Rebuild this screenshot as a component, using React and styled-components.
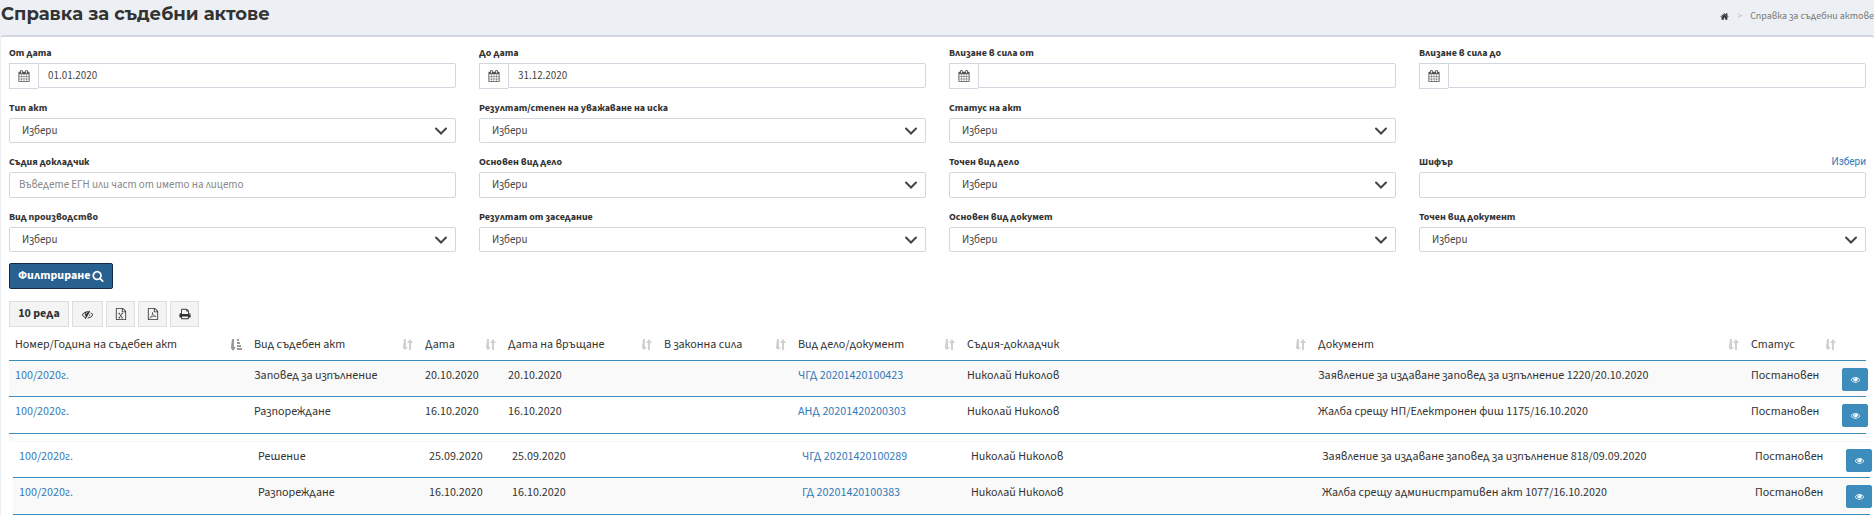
import React from "react";
import styled, { createGlobalStyle, css } from "styled-components";

const GlobalStyle = createGlobalStyle`
  *, *::before, *::after { box-sizing: border-box; }
  body {
    margin: 0;
    background: #ecf0f5;
    color: #333;
    font-family: "Source Sans 3", "Noto Sans", sans-serif;
    font-size: 12px;
    line-height: 16px;
  }
  button, input, select { font: inherit; color: inherit; }
  a { color: #337ab7; text-decoration: none; }
`;

const Header = styled.header`
  display: flex;
  align-items: flex-start;
  justify-content: space-between;
  height: 35px;
  padding-left: 1px;
`;

const Title = styled.h1`
  margin: 0;
  font-family: Montserrat, "Noto Sans", sans-serif;
  font-size: 18px;
  font-weight: 700;
  font-feature-settings: "locl" 0;
  line-height: 28px;
`;

const Breadcrumb = styled.nav`
  display: flex;
  align-items: center;
  gap: 8px;
  padding-top: 8px;
  font-size: 10px;
  color: #777;
  white-space: nowrap;

  a { display: flex; color: #333; }
  i { color: #bbb; font-style: normal; }
`;

const Box = styled.main`
  margin-left: 1px;
  padding: 8px 8px 0;
  background: #fff;
  border-top: 2px solid #d2d6de;
  border-radius: 3px 3px 0 0;
`;

const Filters = styled.form`
  display: grid;
  grid-template-columns: repeat(4, minmax(0, 1fr));
  column-gap: 23px;
  row-gap: 11px;
`;

const FieldCell = styled.div`
  display: grid;
  grid-template-rows: 18px 1fr;
`;

const LabelRow = styled.div`
  display: flex;
  justify-content: space-between;
  height: 16px;
`;

const Label = styled.label`
  font-size: 10px;
  font-weight: 700;
`;

const PickLink = styled.a`
  font-family: Roboto, "Liberation Sans", sans-serif;
  font-size: 10px;
`;

const control = css`
  width: 100%;
  min-width: 0;
  margin: 0;
  background: #fff;
  border: 1px solid #d2d6de;
  border-radius: 2px;
  color: #444;
  font-size: 11px;
  outline: none;
`;

const TextInput = styled.input`
  ${control}
  height: 26px;
  padding: 0 9px 1px;
  &::placeholder { color: #888; opacity: 1; }
`;

const DateGroup = styled.div`
  display: flex;
  align-items: flex-start;
  height: 26px;
`;

const Addon = styled.span`
  display: flex;
  flex: none;
  align-items: center;
  justify-content: center;
  width: 29px;
  height: 26px;
  border: 1px solid #d2d6de;
  border-right: 0;
  color: #555;
`;

const DateInput = styled.input`
  ${control}
  height: 25px;
  padding: 0 9px;
  border-radius: 0 2px 2px 0;
`;

const SelectWrap = styled.div`
  display: grid;
  align-items: center;
  min-height: 25px;

  > * { grid-area: 1 / 1; }
  svg { justify-self: end; margin-right: 9px; pointer-events: none; }
`;

const Select = styled.select`
  ${control}
  height: 100%;
  padding: 0 12px;
  appearance: none;
`;

const FilterButton = styled.button`
  display: flex;
  align-items: center;
  gap: 2px;
  height: 26px;
  margin-top: 11px;
  padding: 0 8px;
  background: #286090;
  border: 1px solid #122b40;
  border-radius: 2px;
  color: #fff;
  font-weight: 700;
`;

const Toolbar = styled.div`
  display: flex;
  gap: 3px;
  margin-top: 12px;
`;

const ToolButton = styled.button`
  display: flex;
  align-items: center;
  justify-content: center;
  width: ${(p) => p.$width};
  height: 26px;
  padding: 0;
  background: #f4f4f4;
  border: 1px solid #ddd;
  color: #333;
  font-weight: 700;
  white-space: nowrap;
`;

const Table = styled.table`
  width: 100%;
  table-layout: fixed;
  border-collapse: separate;
  border-spacing: 0;
`;

const Th = styled.th`
  height: 33px;
  padding: 2px 6px 0;
  font-weight: 400;
  text-align: left;
  white-space: nowrap;

  div { display: flex; align-items: center; justify-content: space-between; }
`;

const Row = styled.tr`
  background: ${(p) => (p.$striped ? "#f9f9f9" : "#fff")};
  &:last-child td { height: 38px; border-bottom: 1px solid #3c8dbc; }
`;

const Td = styled.td`
  height: 36px;
  padding: 7px 0 0 6px;
  border-top: 1px solid ${(p) => (p.$faint ? "#f4f4f4" : "#3c8dbc")};
  vertical-align: top;
  white-space: nowrap;
`;

const ActionTd = styled(Td)`
  padding: 7px 0 0;
`;

const ViewButton = styled.button`
  display: flex;
  align-items: center;
  justify-content: center;
  width: 26px;
  height: 23px;
  padding: 0;
  background: #3c8dbc;
  border: 1px solid #3c8dbc;
  border-radius: 2px;
  color: #fff;
`;

const PageBreak = styled.div`
  height: 7px;
  border-left: 4px solid #f9f9f9;
`;

const NextPage = styled.div`
  margin: 0 -4px 0 4px;
`;

const ICONS = {
  calendar: "M192 1664h288v-288h-288v288zm352 0h320v-288h-320v288zm-352-352h288v-320h-288v320zm352 0h320v-320h-320v320zm-352-384h288v-288h-288v288zm736 736h320v-288h-320v288zm-384-736h320v-288h-320v288zm768 736h288v-288h-288v288zm-384-352h320v-320h-320v320zm-352-864v-288q0-13-9.5-22.5t-22.5-9.5h-64q-13 0-22.5 9.5t-9.5 22.5v288q0 13 9.5 22.5t22.5 9.5h64q13 0 22.5-9.5t9.5-22.5zm736 864h288v-320h-288v320zm-384-384h320v-288h-320v288zm384 0h288v-288h-288v288zm32-480v-288q0-13-9.5-22.5t-22.5-9.5h-64q-13 0-22.5 9.5t-9.5 22.5v288q0 13 9.5 22.5t22.5 9.5h64q13 0 22.5-9.5t9.5-22.5zm384-64v1280q0 52-38 90t-90 38h-1408q-52 0-90-38t-38-90v-1280q0-52 38-90t90-38h128v-96q0-66 47-113t113-47h64q66 0 113 47t47 113v96h384v-96q0-66 47-113t113-47h64q66 0 113 47t47 113v96h128q52 0 90 38t38 90z",
  home: "M1472 992v480q0 26-19 45t-45 19h-384v-384h-256v384h-384q-26 0-45-19t-19-45v-480q0-1 .5-3t.5-3l575-474 575 474q1 2 1 6zm223-69l-62 74q-8 9-21 11h-3q-13 0-21-7l-692-577-692 577q-12 8-24 7-13-2-21-11l-62-74q-8-10-7-23.5t11-21.5l719-599q32-26 76-26t76 26l244 204v-195q0-14 9-23t23-9h192q14 0 23 9t9 23v408l219 182q10 8 11 21.5t-7 23.5z",
  eye: "M1664 960q-152-236-381-353 61 104 61 225 0 185-131.5 316.5t-316.5 131.5-316.5-131.5-131.5-316.5q0-121 61-225-229 117-381 353 133 205 333.5 326.5t434.5 121.5 434.5-121.5 333.5-326.5zm-720-384q0-20-14-34t-34-14q-125 0-214.5 89.5t-89.5 214.5q0 20 14 34t34 14 34-14 14-34q0-86 61-147t147-61q20 0 34-14t14-34zm848 384q0 34-20 69-140 230-376.5 368.5t-499.5 138.5-499.5-139-376.5-368q-20-35-20-69t20-69q140-229 376.5-368t499.5-139 499.5 139 376.5 368q20 35 20 69z",
  eyeSlash: "M555 1335l78-141q-87-63-136-159t-49-203q0-121 61-225-229 117-381 353 167 258 427 375zm389-759q0-20-14-34t-34-14q-125 0-214.5 89.5t-89.5 214.5q0 20 14 34t34 14 34-14 14-34q0-86 61-147t147-61q20 0 34-14t14-34zm363-191q0 7-1 9-106 189-316 567t-315 566l-49 89q-10 16-28 16-12 0-134-70-16-10-16-28 0-12 44-87-143-65-263.5-173t-208.5-245q-20-31-20-69t20-69q153-235 380-371t496-136q89 0 180 17l54-97q10-16 28-16 5 0 18 6t31 15.5 33 18.5 31.5 18.5 19.5 11.5q16 10 16 27zm37 447q0 139-79 253.5t-209 164.5l280-502q8 45 8 84zm448 128q0 35-20 69-39 64-109 145-150 172-347.5 267t-419.5 95l74-132q212-18 392.5-137t301.5-307q-115-179-282-294l63-112q95 64 182.5 153t144.5 184q20 34 20 69z",
  print: "M448 1536h896v-256h-896v256zm0-640h896v-384h-160q-40 0-68-28t-28-68v-160h-640v640zm1152 64q0-26-19-45t-45-19-45 19-19 45 19 45 45 19 45-19 19-45zm128 0v416q0 13-9.5 22.5t-22.5 9.5h-224v160q0 40-28 68t-68 28h-960q-40 0-68-28t-28-68v-160h-224q-13 0-22.5-9.5t-9.5-22.5v-416q0-79 56.5-135.5t135.5-56.5h64v-544q0-40 28-68t68-28h672q40 0 88 20t76 48l152 152q28 28 48 76t20 88v256h64q79 0 135.5 56.5t56.5 135.5z",
  search: "M1216 832q0-185-131.5-316.5t-316.5-131.5-316.5 131.5-131.5 316.5 131.5 316.5 316.5 131.5 316.5-131.5 131.5-316.5zm512 832q0 52-38 90t-90 38q-54 0-90-38l-343-342q-179 124-399 124-143 0-273.5-55.5t-225-150-150-225-55.5-273.5 55.5-273.5 150-225 225-150 273.5-55.5 273.5 55.5 225 150 150 225 55.5 273.5q0 220-124 399l343 343q37 37 37 90z",
  file: "M1596 380q28 28 48 76t20 88v1152q0 40-28 68t-68 28h-1344q-40 0-68-28t-28-68v-1600q0-40 28-68t68-28h896q40 0 88 20t76 48zm-444-244v376h376q-10-29-22-41l-313-313q-12-12-41-22zm384 1528v-1024h-416q-40 0-68-28t-28-68v-416h-768v1536h1280z",
};

const Icon = ({ name, size, children }) => (
  <svg width={size} height={size} viewBox="0 0 1792 1792" fill="currentColor" aria-hidden="true">
    <path d={ICONS[name]} />
    {children}
  </svg>
);

const ExcelIcon = () => (
  <Icon name="file" size={12}>
    <path d="M600 800l500 690M1100 800l-500 690M510 800h230M960 800h230M510 1490h230M960 1490h230" fill="none" stroke="currentColor" strokeWidth="120" />
  </Icon>
);

const PdfIcon = () => (
  <Icon name="file" size={12}>
    <path d="M400 1500c230-90 480-500 430-850c-60 300 220 640 540 600c-200-90-650-10-970 250z" fill="none" stroke="currentColor" strokeWidth="90" strokeLinejoin="round" />
  </Icon>
);

const Chevron = () => (
  <svg width="12" height="8" viewBox="0 0 12 8" aria-hidden="true">
    <path d="M1 1.5L6 6.5L11 1.5" fill="none" stroke="#444" strokeWidth="2" strokeLinecap="round" />
  </svg>
);

const SortIcon = ({ active }) =>
  active ? (
    <svg width="11" height="12" viewBox="0 0 11 12" fill="#999" aria-hidden="true">
      <path d="M1 0h2v8h2l-3 4l-3-4h1zM6 0h2v2h-2zM6 3h3v2h-3zM6 6h4v2h-4zM6 9h5v2h-5z" />
    </svg>
  ) : (
    <svg width="10" height="12" viewBox="0 0 10 12" fill="#d0d0d0" aria-hidden="true">
      <path d="M1 0h2v8h2l-3 3l-3-3h1zM6 11h2v-7h2l-3-4l-3 4h2z" />
    </svg>
  );

const DateField = ({ id, label, value }) => (
  <FieldCell>
    <LabelRow><Label htmlFor={id}>{label}</Label></LabelRow>
    <DateGroup>
      <Addon><Icon name="calendar" size={12} /></Addon>
      <DateInput id={id} type="text" defaultValue={value} />
    </DateGroup>
  </FieldCell>
);

const SelectField = ({ id, label }) => (
  <FieldCell>
    <LabelRow><Label htmlFor={id}>{label}</Label></LabelRow>
    <SelectWrap>
      <Select id={id}><option>Избери</option></Select>
      <Chevron />
    </SelectWrap>
  </FieldCell>
);

const TextField = ({ id, label, placeholder, link }) => (
  <FieldCell>
    <LabelRow>
      <Label htmlFor={id}>{label}</Label>
      {link && <PickLink href="#pick">{link}</PickLink>}
    </LabelRow>
    <TextInput id={id} type="text" placeholder={placeholder} />
  </FieldCell>
);

const COLUMNS = [
  { title: "Номер/Година на съдебен акт", width: 239 },
  { title: "Вид съдебен акт", width: 171 },
  { title: "Дата", width: 83 },
  { title: "Дата на връщане", width: 156 },
  { title: "В законна сила", width: 134 },
  { title: "Вид дело/документ", width: 169 },
  { title: "Съдия-докладчик", width: 351 },
  { title: "Документ", width: 433 },
  { title: "Статус", width: 97 },
  { title: "", width: 24 },
];

const PAGE_ONE = [
  ["Заповед за изпълнение", "20.10.2020", "ЧГД 20201420100423", "Заявление за издаване заповед за изпълнение 1220/20.10.2020"],
  ["Разпореждане", "16.10.2020", "АНД 20201420200303", "Жалба срещу НП/Електронен фиш 1175/16.10.2020"],
];

const PAGE_TWO = [
  ["Решение", "25.09.2020", "ЧГД 20201420100289", "Заявление за издаване заповед за изпълнение 818/09.09.2020"],
  ["Разпореждане", "16.10.2020", "ГД 20201420100383", "Жалба срещу административен акт 1077/16.10.2020"],
];

const Columns = () => (
  <colgroup>
    {COLUMNS.map((c, i) => <col key={i} width={c.width} />)}
  </colgroup>
);

const ActRow = ({ act, striped, faint }) => {
  const [kind, date, dossier, document] = act;
  return (
    <Row $striped={striped}>
      <Td $faint={faint}><a href="#act">100/2020г.</a></Td>
      <Td $faint={faint}>{kind}</Td>
      <Td $faint={faint}>{date}</Td>
      <Td $faint={faint}>{date}</Td>
      <Td $faint={faint} />
      <Td $faint={faint}><a href="#case">{dossier}</a></Td>
      <Td $faint={faint}>Николай Николов</Td>
      <Td $faint={faint}>{document}</Td>
      <Td $faint={faint}>Постановен</Td>
      <ActionTd $faint={faint}>
        <ViewButton type="button" aria-label="Преглед"><Icon name="eye" size={9} /></ViewButton>
      </ActionTd>
    </Row>
  );
};

export default function App() {
  return (
    <div lang="bg">
      <GlobalStyle />
      <Header>
        <Title>Справка за съдебни актове</Title>
        <Breadcrumb>
          <a href="#home" aria-label="Начало"><Icon name="home" size={9} /></a>
          <i>&gt;</i>
          <span>Справка за съдебни актове</span>
        </Breadcrumb>
      </Header>
      <Box>
        <Filters>
          <DateField id="from" label="От дата" value="01.01.2020" />
          <DateField id="to" label="До дата" value="31.12.2020" />
          <DateField id="force-from" label="Влизане в сила от" value="" />
          <DateField id="force-to" label="Влизане в сила до" value="" />
          <SelectField id="act-type" label="Тип акт" />
          <SelectField id="result" label="Резултат/степен на уважаване на иска" />
          <SelectField id="status" label="Статус на акт" />
          <span />
          <TextField id="judge" label="Съдия докладчик" placeholder="Въведете ЕГН или част от името на лицето" />
          <SelectField id="case-group" label="Основен вид дело" />
          <SelectField id="case-type" label="Точен вид дело" />
          <TextField id="code" label="Шифър" link="Избери" />
          <SelectField id="proceeding" label="Вид производство" />
          <SelectField id="session" label="Резултат от заседание" />
          <SelectField id="doc-group" label="Основен вид докумет" />
          <SelectField id="doc-type" label="Точен вид документ" />
        </Filters>
        <FilterButton type="button">Филтриране <Icon name="search" size={12} /></FilterButton>
        <Toolbar>
          <ToolButton type="button" $width="60px">10 реда</ToolButton>
          <ToolButton type="button" $width="31px" aria-label="Колони"><Icon name="eyeSlash" size={11} /></ToolButton>
          <ToolButton type="button" $width="29px" aria-label="Excel"><ExcelIcon /></ToolButton>
          <ToolButton type="button" $width="29px" aria-label="PDF"><PdfIcon /></ToolButton>
          <ToolButton type="button" $width="29px" aria-label="Печат"><Icon name="print" size={12} /></ToolButton>
        </Toolbar>
        <Table>
          <Columns />
          <thead>
            <tr>
              {COLUMNS.map((c, i) => (
                <Th key={i}>
                  {c.title && <div>{c.title}<SortIcon active={i === 0} /></div>}
                </Th>
              ))}
            </tr>
          </thead>
          <tbody>
            {PAGE_ONE.map((act, i) => <ActRow key={i} act={act} striped={i === 0} />)}
          </tbody>
        </Table>
        <PageBreak />
        <NextPage>
          <Table>
            <Columns />
            <tbody>
              {PAGE_TWO.map((act, i) => <ActRow key={i} act={act} striped={i === 1} faint={i === 0} />)}
            </tbody>
          </Table>
        </NextPage>
      </Box>
    </div>
  );
}
